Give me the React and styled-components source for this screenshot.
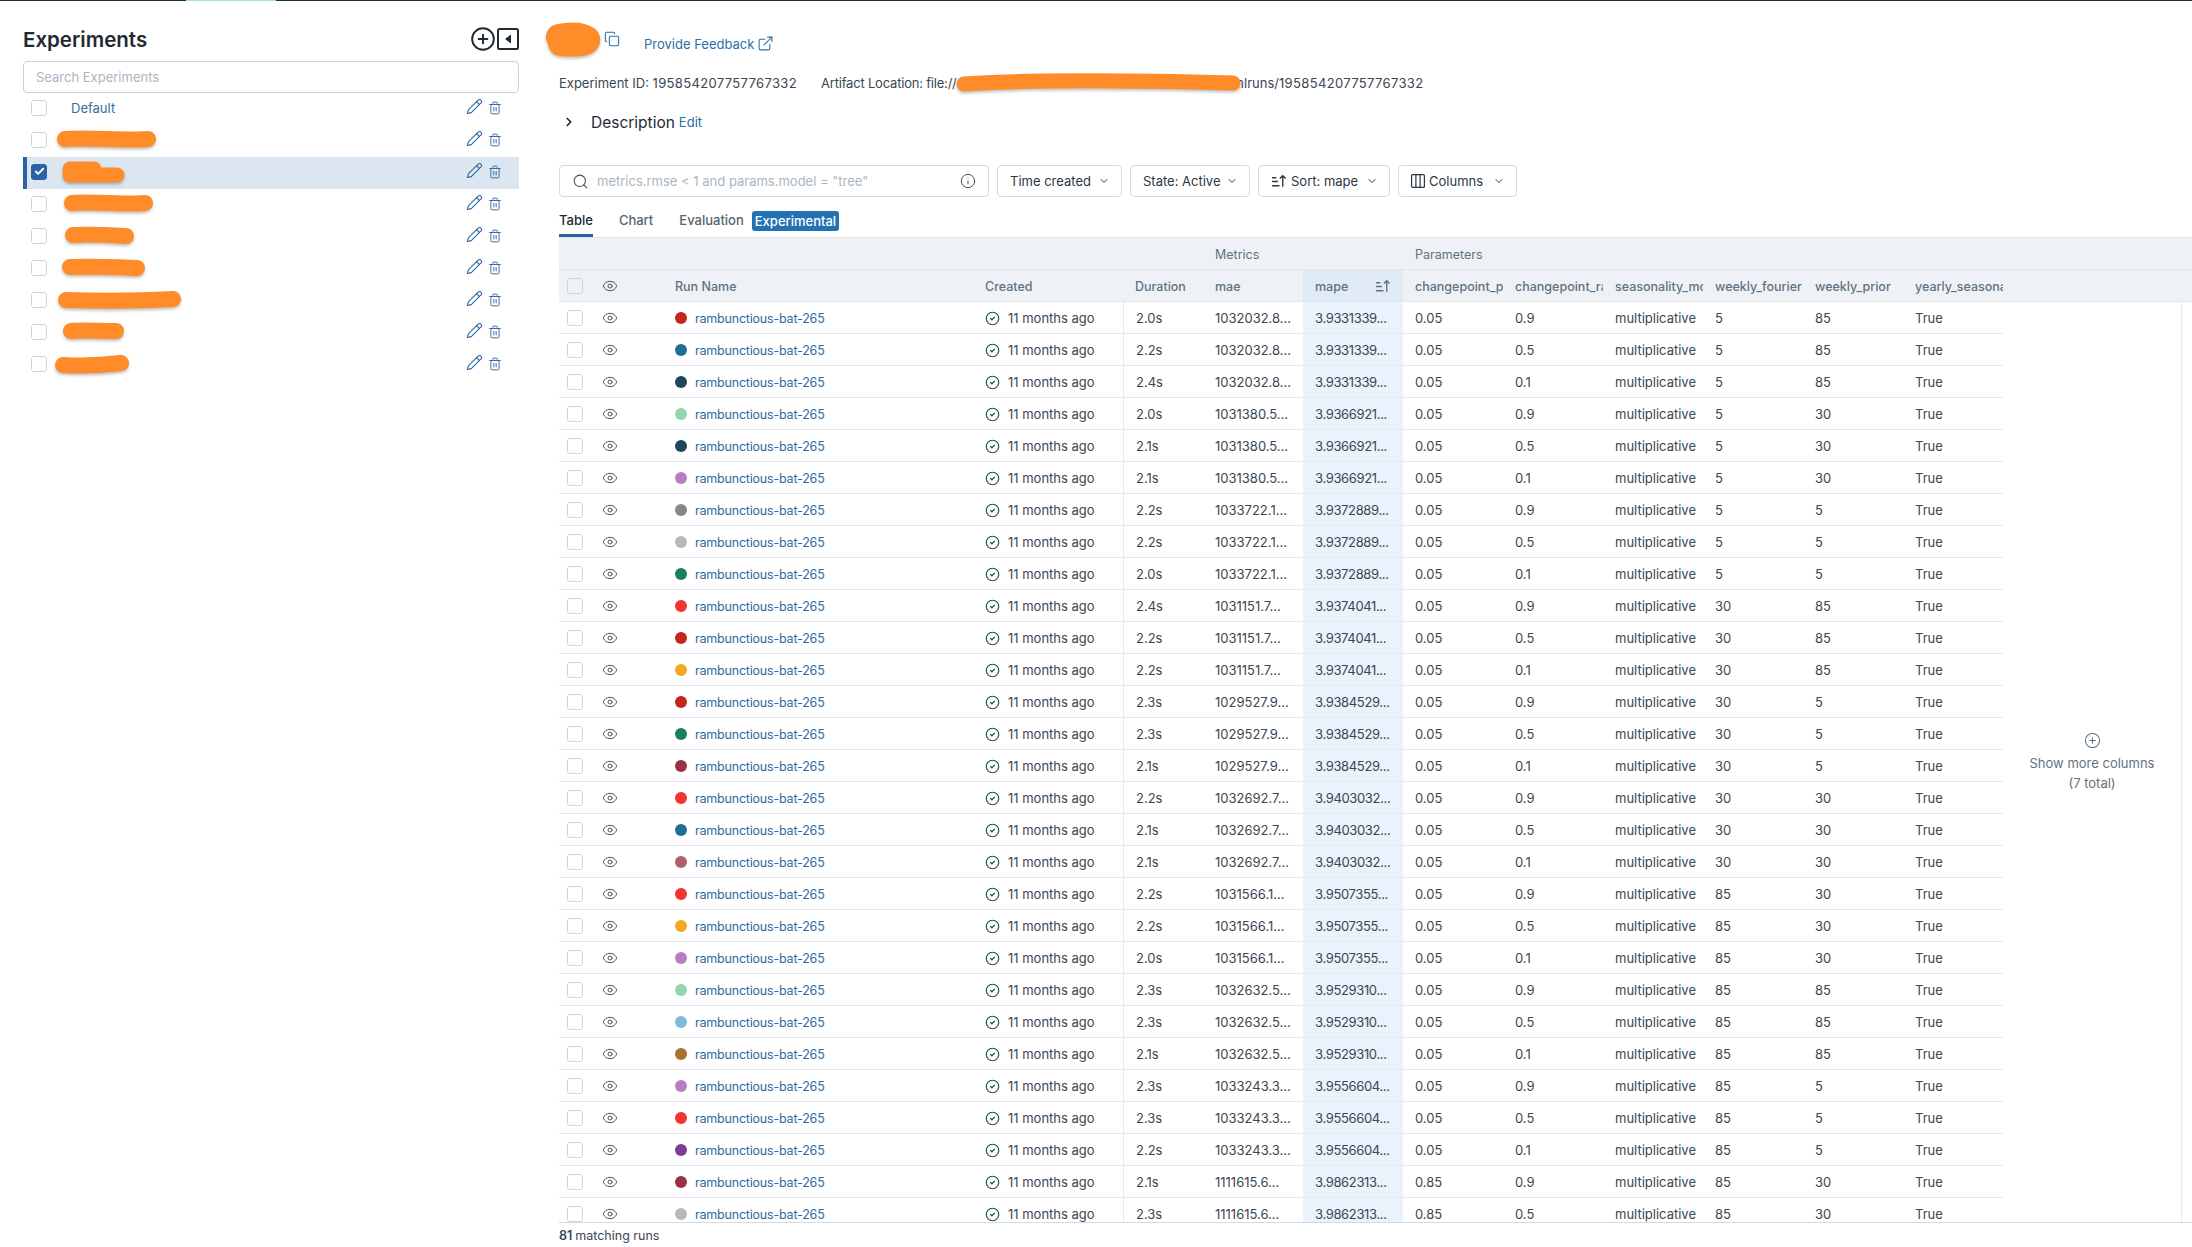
import React from "react";
import styled, { createGlobalStyle } from "styled-components";
import {
  Check,
  ChevronDown,
  ChevronRight,
  CircleCheck,
  CirclePlus,
  Copy,
  ExternalLink,
  Eye,
  Info,
  Pencil,
  Search,
  Trash2,
} from "lucide-react";

const GlobalStyle = createGlobalStyle`
  * { box-sizing: border-box; }
  html, body { margin: 0; padding: 0; background: #fff; }
  body {
    font-family: Inter, "Liberation Sans", sans-serif;
    font-size: 13px;
    color: #2a3845;
  }
`;

const sidebarRows = [
  { name: "Default" },
  { d: "M8 8 C30 6 70 10 91 8", w: 99, h: 18, left: 10 },
  { d: "M10 9 L34 9 M10 15 L57 15", w: 66, h: 24, left: 13, stroke: 15, selected: true },
  { d: "M8 8 C30 6 60 10 81 8", w: 90, h: 18, left: 17 },
  { d: "M8 8 C24 7 44 8 61 9", w: 70, h: 18, left: 18 },
  { d: "M8 8 C30 7 50 8 75 9", w: 84, h: 18, left: 15 },
  { d: "M8 9 C40 10 80 10 115 8", w: 124, h: 18, left: 11 },
  { d: "M8 8 C20 7 36 8 53 8", w: 62, h: 18, left: 16 },
  { d: "M8 10 C24 11 50 10 66 8", w: 75, h: 18, left: 8 },
];

const RED = "#f0362f";
const CRIMSON = "#c4251f";
const TEAL = "#1f6f94";
const NAVY = "#1f4659";
const MINT = "#96d6ab";
const LILAC = "#b57fc0";
const GREY = "#868686";
const SILVER = "#b8b8b8";
const GREEN = "#1a7f5a";
const AMBER = "#f5a623";
const WINE = "#9c3046";

const runs = [
  [CRIMSON, "2.0s", "1032032.8...", "3.9331339...", "0.05", "0.9", "5", "85"],
  [TEAL, "2.2s", "1032032.8...", "3.9331339...", "0.05", "0.5", "5", "85"],
  [NAVY, "2.4s", "1032032.8...", "3.9331339...", "0.05", "0.1", "5", "85"],
  [MINT, "2.0s", "1031380.5...", "3.9366921...", "0.05", "0.9", "5", "30"],
  [NAVY, "2.1s", "1031380.5...", "3.9366921...", "0.05", "0.5", "5", "30"],
  [LILAC, "2.1s", "1031380.5...", "3.9366921...", "0.05", "0.1", "5", "30"],
  [GREY, "2.2s", "1033722.1...", "3.9372889...", "0.05", "0.9", "5", "5"],
  [SILVER, "2.2s", "1033722.1...", "3.9372889...", "0.05", "0.5", "5", "5"],
  [GREEN, "2.0s", "1033722.1...", "3.9372889...", "0.05", "0.1", "5", "5"],
  [RED, "2.4s", "1031151.7...", "3.9374041...", "0.05", "0.9", "30", "85"],
  [CRIMSON, "2.2s", "1031151.7...", "3.9374041...", "0.05", "0.5", "30", "85"],
  [AMBER, "2.2s", "1031151.7...", "3.9374041...", "0.05", "0.1", "30", "85"],
  [CRIMSON, "2.3s", "1029527.9...", "3.9384529...", "0.05", "0.9", "30", "5"],
  [GREEN, "2.3s", "1029527.9...", "3.9384529...", "0.05", "0.5", "30", "5"],
  [WINE, "2.1s", "1029527.9...", "3.9384529...", "0.05", "0.1", "30", "5"],
  [RED, "2.2s", "1032692.7...", "3.9403032...", "0.05", "0.9", "30", "30"],
  [TEAL, "2.1s", "1032692.7...", "3.9403032...", "0.05", "0.5", "30", "30"],
  ["#b0606d", "2.1s", "1032692.7...", "3.9403032...", "0.05", "0.1", "30", "30"],
  [RED, "2.2s", "1031566.1...", "3.9507355...", "0.05", "0.9", "85", "30"],
  [AMBER, "2.2s", "1031566.1...", "3.9507355...", "0.05", "0.5", "85", "30"],
  [LILAC, "2.0s", "1031566.1...", "3.9507355...", "0.05", "0.1", "85", "30"],
  [MINT, "2.3s", "1032632.5...", "3.9529310...", "0.05", "0.9", "85", "85"],
  ["#7fb9dc", "2.3s", "1032632.5...", "3.9529310...", "0.05", "0.5", "85", "85"],
  ["#a9722c", "2.1s", "1032632.5...", "3.9529310...", "0.05", "0.1", "85", "85"],
  [LILAC, "2.3s", "1033243.3...", "3.9556604...", "0.05", "0.9", "85", "5"],
  [RED, "2.3s", "1033243.3...", "3.9556604...", "0.05", "0.5", "85", "5"],
  ["#7d3c98", "2.2s", "1033243.3...", "3.9556604...", "0.05", "0.1", "85", "5"],
  [WINE, "2.1s", "1111615.6...", "3.9862313...", "0.85", "0.9", "85", "30"],
  [SILVER, "2.3s", "1111615.6...", "3.9862313...", "0.85", "0.5", "85", "30"],
];

const columnsTemplate = "41px 63px 310px 150px 80px repeat(8, 100px)";

const Page = styled.div`
  height: 100vh;
  overflow: hidden;
  display: flex;
  flex-direction: column;
`;

const TopBar = styled.div`
  height: 1px;
  flex: none;
  background: linear-gradient(
    to right,
    #1d3040 186px,
    #a5e0e5 186px,
    #a5e0e5 276px,
    #1d3040 276px
  );
`;

const Layout = styled.div`
  flex: 1;
  min-height: 0;
  display: flex;
`;

const Sidebar = styled.aside`
  width: 519px;
  flex: none;
  padding: 26px 0 0 23px;
`;

const SidebarHead = styled.div`
  height: 24px;
  margin-bottom: 10px;
  display: flex;
  align-items: center;
  justify-content: space-between;
`;

const Title = styled.h1`
  margin: 0;
  font-size: 20.5px;
  font-weight: 600;
  color: #1f2a35;
`;

const HeadIcons = styled.div`
  display: flex;
  align-items: center;
  gap: 1px;
  color: #1f2a35;
`;

const SidebarSearch = styled.div`
  height: 32px;
  padding-left: 12px;
  display: flex;
  align-items: center;
  border: 1px solid #c9d2da;
  border-radius: 4px;
  color: #a9b6c2;
`;

const ExperimentRow = styled.div`
  height: 32px;
  padding: 0 0 3px ${(p) => (p.$selected ? "4px" : "8px")};
  display: flex;
  align-items: center;
  background: ${(p) => (p.$selected ? "#dce6f1" : "transparent")};
  border-left: ${(p) => (p.$selected ? "4px solid #2a62a6" : "none")};
`;

const Box = styled.span`
  width: 16px;
  height: 16px;
  flex: none;
  display: inline-flex;
  align-items: center;
  justify-content: center;
  border: 1px solid ${(p) => (p.$checked ? "#2a62a6" : "#cdd5dc")};
  border-radius: 3px;
  background: ${(p) => (p.$checked ? "#2a62a6" : p.$muted ? "#eef2f6" : "#fff")};
  color: #fff;
`;

const ExperimentName = styled.a`
  margin-left: 24px;
  color: #3a6d9f;
`;

const Scribble = styled.svg`
  flex: none;
  margin-left: ${(p) => p.$left || 0}px;
  margin-right: ${(p) => p.$right || 0}px;
  overflow: visible;
  filter: drop-shadow(0 2px 1.5px rgba(0, 0, 0, 0.25));
  fill: none;
  stroke: #ff8c29;
  stroke-linecap: round;
  stroke-linejoin: round;
`;

const RowActions = styled.div`
  margin-left: auto;
  margin-right: 17px;
  display: flex;
  align-items: center;
  gap: 5px;
  color: #2f659a;
`;

const EditIcon = styled(Pencil)`
  margin-top: -3px;
`;

const Main = styled.main`
  flex: 1;
  min-width: 0;
  padding-left: 40px;
  display: flex;
  flex-direction: column;
`;

const NameRow = styled.div`
  height: 30px;
  margin-top: 24px;
  display: flex;
  align-items: center;
  color: #2a6fa8;
`;

const CopyBtn = styled.span`
  display: inline-flex;
  margin: -2px 0 0 3px;
`;

const Feedback = styled.a`
  margin: 7px 0 0 24px;
  display: inline-flex;
  align-items: center;
  gap: 3px;
  color: #2a6fa8;
`;

const InfoLine = styled.div`
  height: 20px;
  margin-top: 18px;
  display: flex;
  align-items: center;
  gap: 24px;
  color: #3a4653;
  white-space: nowrap;
`;

const Digits = styled.span`
  letter-spacing: 0.35px;
`;

const ArtifactPath = styled.span`
  display: inline-flex;
  align-items: center;
`;

const ArtifactLabel = styled.span`
  letter-spacing: -0.2px;
`;

const DescriptionRow = styled.div`
  height: 24px;
  margin-top: 17px;
  display: flex;
  align-items: center;
  font-size: 15.5px;
  color: #1f2a35;
`;

const Caret = styled.span`
  display: inline-flex;
  margin: 0 15px 0 3px;
`;

const EditLink = styled.a`
  margin-left: 4px;
  font-size: 13px;
  color: #2a6fa8;
`;

const Toolbar = styled.div`
  height: 32px;
  margin-top: 31px;
  display: flex;
  gap: 8px;
`;

const FilterInput = styled.div`
  width: 430px;
  padding: 0 12px;
  display: flex;
  align-items: center;
  gap: 8px;
  border: 1px solid #d3dae1;
  border-radius: 4px;
  color: #a9b6c2;
  svg {
    color: #44525f;
    flex: none;
  }
`;

const Placeholder = styled.span`
  flex: 1;
`;

const DropButton = styled.div`
  width: ${(p) => p.$width}px;
  padding: 0 11px 0 12px;
  display: flex;
  align-items: center;
  justify-content: space-between;
  border: 1px solid #d3dae1;
  border-radius: 4px;
  color: #2a3845;
`;

const DropLabel = styled.span`
  display: inline-flex;
  align-items: center;
  gap: 4px;
`;

const Tabs = styled.div`
  height: 40px;
  display: flex;
  align-items: center;
  gap: 26px;
  padding-top: 8px;
`;

const Tab = styled.span`
  height: 32px;
  padding-top: 7px;
  font-weight: 500;
  color: ${(p) => (p.$active ? "#1f2a35" : "#56656f")};
  border-bottom: 3px solid ${(p) => (p.$active ? "#2a62a6" : "transparent")};
`;

const Badge = styled.span`
  height: 20px;
  margin-left: -18px;
  padding: 0 3px;
  display: inline-flex;
  align-items: center;
  border-radius: 3px;
  background: #2272b4;
  color: #fff;
  font-weight: 500;
`;

const GroupRow = styled.div`
  height: 33px;
  flex: none;
  display: grid;
  grid-template-columns: ${columnsTemplate};
  align-items: center;
  padding-top: 1px;
  background: #eef2f6;
  border-top: 1px solid #dde3e9;
  border-bottom: 1px solid #e2e7ec;
  color: #5f7281;
  font-size: 12.5px;
`;

const GroupLabel = styled.span`
  grid-column: ${(p) => p.$column} / span 1;
  padding-left: 12px;
  white-space: nowrap;
`;

const HeadRow = styled.div`
  height: 32px;
  flex: none;
  display: grid;
  grid-template-columns: ${columnsTemplate};
  align-items: center;
  background: #eef2f6;
  border-bottom: 1px solid #e2e7ec;
  color: #5f7281;
  font-size: 12.5px;
  font-weight: 500;
`;

const HeadCell = styled.div`
  height: 100%;
  padding-left: 12px;
  padding-top: 1px;
  display: flex;
  align-items: center;
  justify-content: space-between;
  overflow: hidden;
  white-space: nowrap;
  background: ${(p) => (p.$sorted ? "#e0ebf5" : "transparent")};
  padding-right: ${(p) => (p.$sorted ? "12px" : "0")};
`;

const BoxCell = styled.div`
  padding-left: 8px;
  display: flex;
  align-items: center;
`;

const EyeCell = styled.div`
  padding-left: 2px;
  display: flex;
  align-items: center;
  color: #4a5966;
`;

const Body = styled.div`
  flex: 1;
  min-height: 0;
  display: flex;
  overflow: hidden;
  border-bottom: 1px solid #d3dae1;
`;

const Rows = styled.div`
  width: 1444px;
  flex: none;
`;

const Row = styled.div`
  height: 32px;
  display: grid;
  grid-template-columns: ${columnsTemplate};
  align-items: center;
  border-bottom: 1px solid #e6eaee;
  color: #3a4653;
  font-size: 13px;
`;

const Cell = styled.div`
  height: 100%;
  padding: 1px 0 0 12px;
  display: flex;
  align-items: center;
  white-space: nowrap;
  overflow: hidden;
  background: ${(p) => (p.$sorted ? "#eaf3fb" : "transparent")};
  letter-spacing: ${(p) => (p.$sorted ? "-0.35px" : "normal")};
  border-left: ${(p) => (p.$divider ? "1px solid #e6eaee" : "none")};
`;

const Dot = styled.span`
  width: 12px;
  height: 12px;
  flex: none;
  margin-right: 8px;
  border-radius: 50%;
  background: ${(p) => p.$color};
`;

const RunLink = styled.a`
  color: #2f6a9c;
  font-size: 12.5px;
  letter-spacing: -0.2px;
`;

const Created = styled.span`
  display: inline-flex;
  align-items: center;
  gap: 8px;
  svg {
    color: #1f5a3c;
  }
`;

const MorePanel = styled.div`
  width: 179px;
  flex: none;
  display: flex;
  flex-direction: column;
  align-items: center;
  justify-content: center;
  gap: 4px;
  border-right: 1px solid #e6eaee;
  color: #5f7281;
  line-height: 20px;
  text-align: center;
`;

const Footer = styled.div`
  height: 24px;
  flex: none;
  display: flex;
  align-items: center;
  font-size: 12.5px;
  color: #3a4653;
  strong {
    font-weight: 600;
    margin-right: 3px;
  }
`;

function SortIcon() {
  return (
    <svg width="16" height="14" viewBox="0 0 15 13" fill="none" stroke="currentColor" strokeWidth="1.3">
      <path d="M1 3.5H5M1 7H6.5M1 11H8" />
      <path d="M11 12V1.5M8.3 4.2 11 1.5l2.7 2.7" />
    </svg>
  );
}

function ColumnsIcon() {
  return (
    <svg width="14" height="14" viewBox="0 0 14 14" fill="none" stroke="currentColor" strokeWidth="1.2">
      <rect x="0.6" y="0.6" width="12.8" height="12.8" rx="1" />
      <path d="M4.9 0.6V13.4M9.1 0.6V13.4" />
    </svg>
  );
}

function CollapseIcon() {
  return (
    <svg width="22" height="22" viewBox="0 0 22 22">
      <rect x="1" y="1" width="20" height="20" rx="1.5" fill="none" stroke="currentColor" strokeWidth="2" />
      <path d="M14 6.5V15.5L8 11Z" fill="currentColor" />
    </svg>
  );
}

function Smear({ d, w, h, left, right, stroke = 16 }) {
  return (
    <Scribble width={w} height={h} viewBox={`0 0 ${w} ${h}`} $left={left} $right={right} strokeWidth={stroke}>
      <path d={d} />
    </Scribble>
  );
}

export default function App() {
  return (
    <Page>
      <GlobalStyle />
      <TopBar />
      <Layout>
        <Sidebar>
          <SidebarHead>
            <Title>Experiments</Title>
            <HeadIcons>
              <CirclePlus size={26} strokeWidth={1.8} />
              <CollapseIcon />
            </HeadIcons>
          </SidebarHead>
          <SidebarSearch>Search Experiments</SidebarSearch>
          {sidebarRows.map((row, i) => (
            <ExperimentRow key={i} $selected={row.selected}>
              <Box $checked={row.selected}>
                {row.selected && <Check size={11} strokeWidth={4} />}
              </Box>
              {row.name ? (
                <ExperimentName>{row.name}</ExperimentName>
              ) : (
                <Smear {...row} />
              )}
              <RowActions>
                <EditIcon size={17} strokeWidth={1.5} />
                <Trash2 size={14} strokeWidth={1.6} />
              </RowActions>
            </ExperimentRow>
          ))}
        </Sidebar>
        <Main>
          <NameRow>
            <Smear d="M14 11 C24 9 36 9 42 13 C44 18 28 18 16 17" w={56} h={28} left={-14} stroke={26} />
            <CopyBtn>
              <Copy size={16} strokeWidth={1.6} />
            </CopyBtn>
            <Feedback>
              Provide Feedback <ExternalLink size={17} strokeWidth={1.5} />
            </Feedback>
          </NameRow>
          <InfoLine>
            <span>
              Experiment ID: <Digits>195854207757767332</Digits>
            </span>
            <ArtifactPath>
              <ArtifactLabel>Artifact Location: file://</ArtifactLabel>
              <Smear d="M7 11 C80 6 200 8 276 10" w={283} h={20} right={-7} stroke={15} />
              <span>
                mlruns/<Digits>195854207757767332</Digits>
              </span>
            </ArtifactPath>
          </InfoLine>
          <DescriptionRow>
            <Caret>
              <ChevronRight size={14} strokeWidth={3} />
            </Caret>
            Description
            <EditLink>Edit</EditLink>
          </DescriptionRow>
          <Toolbar>
            <FilterInput>
              <Search size={17} strokeWidth={1.5} />
              <Placeholder>metrics.rmse &lt; 1 and params.model = "tree"</Placeholder>
              <Info size={16} strokeWidth={1.5} />
            </FilterInput>
            <DropButton $width={125}>
              Time created <ChevronDown size={12} />
            </DropButton>
            <DropButton $width={120}>
              State: Active <ChevronDown size={12} />
            </DropButton>
            <DropButton $width={132}>
              <DropLabel>
                <SortIcon /> Sort: mape
              </DropLabel>
              <ChevronDown size={12} />
            </DropButton>
            <DropButton $width={119}>
              <DropLabel>
                <ColumnsIcon /> Columns
              </DropLabel>
              <ChevronDown size={12} />
            </DropButton>
          </Toolbar>
          <Tabs>
            <Tab $active>Table</Tab>
            <Tab>Chart</Tab>
            <Tab>Evaluation</Tab>
            <Badge>Experimental</Badge>
          </Tabs>
          <GroupRow>
            <GroupLabel $column={6}>Metrics</GroupLabel>
            <GroupLabel $column={8}>Parameters</GroupLabel>
          </GroupRow>
          <HeadRow>
            <BoxCell>
              <Box $muted />
            </BoxCell>
            <EyeCell>
              <Eye size={16} strokeWidth={1.5} />
            </EyeCell>
            <HeadCell>Run Name</HeadCell>
            <HeadCell>Created</HeadCell>
            <HeadCell>Duration</HeadCell>
            <HeadCell>mae</HeadCell>
            <HeadCell $sorted>
              mape <SortIcon />
            </HeadCell>
            <HeadCell>changepoint_prior_scale</HeadCell>
            <HeadCell>changepoint_range</HeadCell>
            <HeadCell>seasonality_mode</HeadCell>
            <HeadCell>weekly_fourier</HeadCell>
            <HeadCell>weekly_prior</HeadCell>
            <HeadCell>yearly_seasonality</HeadCell>
          </HeadRow>
          <Body>
            <Rows>
              {runs.map(([color, duration, mae, mape, prior, range, fourier, weekly], i) => (
                <Row key={i}>
                  <BoxCell>
                    <Box />
                  </BoxCell>
                  <EyeCell>
                    <Eye size={16} strokeWidth={1.5} />
                  </EyeCell>
                  <Cell>
                    <Dot $color={color} />
                    <RunLink>rambunctious-bat-265</RunLink>
                  </Cell>
                  <Cell>
                    <Created>
                      <CircleCheck size={15} strokeWidth={1.9} />
                      11 months ago
                    </Created>
                  </Cell>
                  <Cell $divider>{duration}</Cell>
                  <Cell>{mae}</Cell>
                  <Cell $sorted>{mape}</Cell>
                  <Cell>{prior}</Cell>
                  <Cell>{range}</Cell>
                  <Cell>multiplicative</Cell>
                  <Cell>{fourier}</Cell>
                  <Cell>{weekly}</Cell>
                  <Cell>True</Cell>
                </Row>
              ))}
            </Rows>
            <MorePanel>
              <CirclePlus size={17} strokeWidth={1.5} />
              <span>
                Show more columns
                <br />
                (7 total)
              </span>
            </MorePanel>
          </Body>
          <Footer>
            <strong>81</strong> matching runs
          </Footer>
        </Main>
      </Layout>
    </Page>
  );
}
